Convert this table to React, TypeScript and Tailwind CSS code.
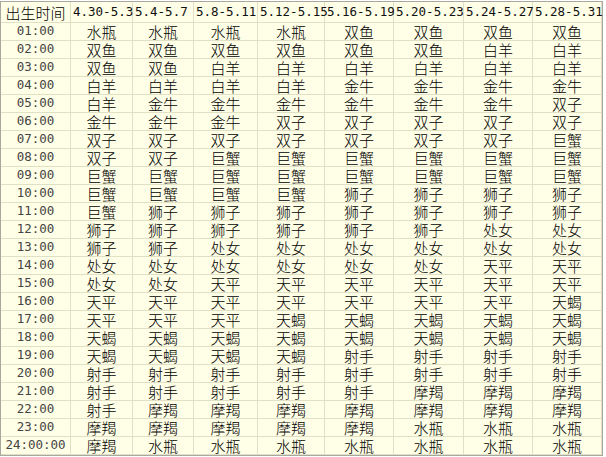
import React from "react";

const headers = ["4.30-5.3", "5.4-5.7", "5.8-5.11", "5.12-5.15", "5.16-5.19", "5.20-5.23", "5.24-5.27", "5.28-5.31"];

const rows: [string, string[]][] = [
  ["01:00", ["水瓶", "水瓶", "水瓶", "水瓶", "双鱼", "双鱼", "双鱼", "双鱼"]],
  ["02:00", ["双鱼", "双鱼", "双鱼", "双鱼", "双鱼", "双鱼", "白羊", "白羊"]],
  ["03:00", ["双鱼", "双鱼", "白羊", "白羊", "白羊", "白羊", "白羊", "白羊"]],
  ["04:00", ["白羊", "白羊", "白羊", "白羊", "金牛", "金牛", "金牛", "金牛"]],
  ["05:00", ["白羊", "金牛", "金牛", "金牛", "金牛", "金牛", "金牛", "双子"]],
  ["06:00", ["金牛", "金牛", "金牛", "双子", "双子", "双子", "双子", "双子"]],
  ["07:00", ["双子", "双子", "双子", "双子", "双子", "双子", "双子", "巨蟹"]],
  ["08:00", ["双子", "双子", "巨蟹", "巨蟹", "巨蟹", "巨蟹", "巨蟹", "巨蟹"]],
  ["09:00", ["巨蟹", "巨蟹", "巨蟹", "巨蟹", "巨蟹", "巨蟹", "巨蟹", "巨蟹"]],
  ["10:00", ["巨蟹", "巨蟹", "巨蟹", "巨蟹", "狮子", "狮子", "狮子", "狮子"]],
  ["11:00", ["巨蟹", "狮子", "狮子", "狮子", "狮子", "狮子", "狮子", "狮子"]],
  ["12:00", ["狮子", "狮子", "狮子", "狮子", "狮子", "狮子", "处女", "处女"]],
  ["13:00", ["狮子", "狮子", "处女", "处女", "处女", "处女", "处女", "处女"]],
  ["14:00", ["处女", "处女", "处女", "处女", "处女", "处女", "天平", "天平"]],
  ["15:00", ["处女", "处女", "天平", "天平", "天平", "天平", "天平", "天平"]],
  ["16:00", ["天平", "天平", "天平", "天平", "天平", "天平", "天平", "天蝎"]],
  ["17:00", ["天平", "天平", "天平", "天蝎", "天蝎", "天蝎", "天蝎", "天蝎"]],
  ["18:00", ["天蝎", "天蝎", "天蝎", "天蝎", "天蝎", "天蝎", "天蝎", "天蝎"]],
  ["19:00", ["天蝎", "天蝎", "天蝎", "天蝎", "射手", "射手", "射手", "射手"]],
  ["20:00", ["射手", "射手", "射手", "射手", "射手", "射手", "射手", "射手"]],
  ["21:00", ["射手", "射手", "射手", "射手", "射手", "摩羯", "摩羯", "摩羯"]],
  ["22:00", ["射手", "摩羯", "摩羯", "摩羯", "摩羯", "摩羯", "摩羯", "摩羯"]],
  ["23:00", ["摩羯", "摩羯", "摩羯", "摩羯", "摩羯", "水瓶", "水瓶", "水瓶"]],
  ["24:00:00", ["摩羯", "水瓶", "水瓶", "水瓶", "水瓶", "水瓶", "水瓶", "水瓶"]],
];

export default function App() {
  return (
    <div className="w-[606px] h-[457px] bg-white pt-px overflow-hidden">
      <div className="w-[603px] border border-[#a8a8a0] bg-[#fffee6] grid grid-cols-[70px_62px_61px_64px_67px_69px_70px_69px_69px] font-['Noto_Sans_CJK_SC',sans-serif]">
        <div className="h-[21px] border-r border-b border-[#e0e0c4] flex items-center justify-center text-[15px] leading-none font-light text-black">
          出生时间
        </div>
        {headers.map((h) => (
          <div
            key={h}
            className="h-[21px] border-r border-b border-[#e0e0c4] flex items-center pl-[2px] whitespace-nowrap text-[12.5px] leading-none text-[#111] font-['DejaVu_Sans_Mono',monospace]"
          >
            {h}
          </div>
        ))}
        {rows.map(([t, vals]) => (
          <React.Fragment key={t}>
            <div className="h-[18px] border-r border-b border-[#e0e0c4] flex items-center justify-center text-[12.5px] leading-none text-[#444] font-['DejaVu_Sans_Mono',monospace]">
              {t}
            </div>
            {vals.map((v, i) => (
              <div
                key={i}
                className="h-[18px] border-r border-b border-[#e0e0c4] flex items-center justify-center text-[15px] leading-none font-light text-black"
              >
                {v}
              </div>
            ))}
          </React.Fragment>
        ))}
      </div>
    </div>
  );
}
